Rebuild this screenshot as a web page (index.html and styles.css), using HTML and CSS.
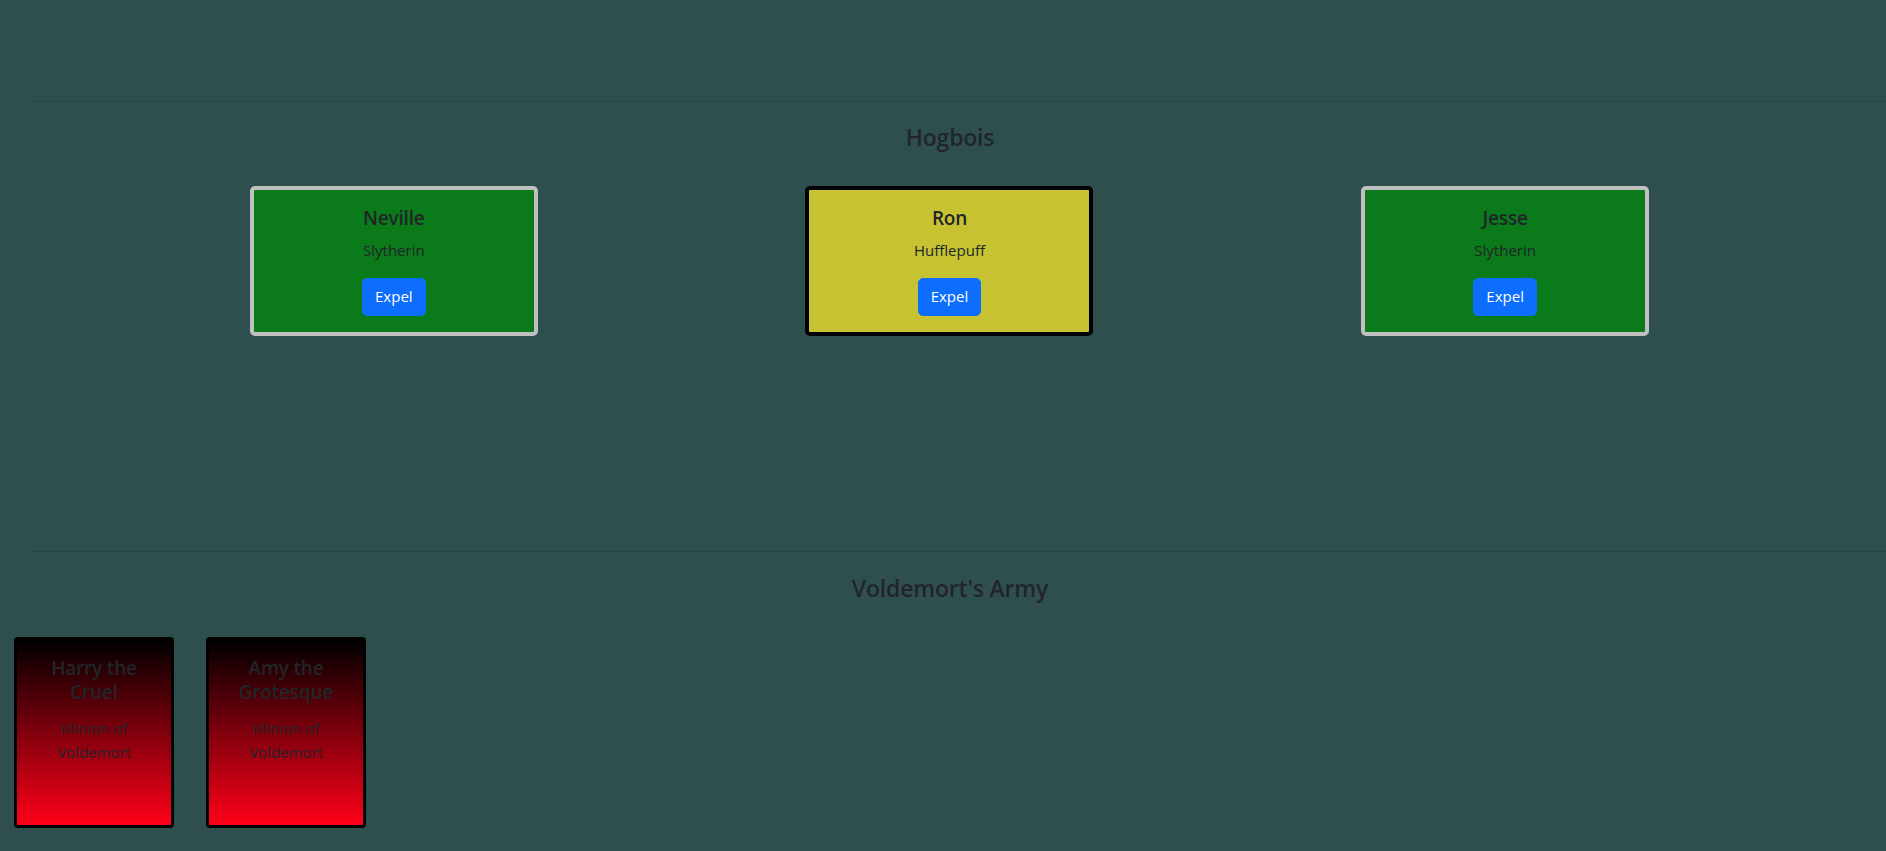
FILE: index.html
```html
<!DOCTYPE html>
<html lang="en">
<head>
<meta charset="utf-8">
<title>Hogwarts</title>
<link rel="stylesheet" href="styles.css">
</head>
<body>
  <header class="top"></header>

  <section class="house">
    <hr class="divider">
    <h4 class="section-title">Hogbois</h4>
    <div class="student-row">
      <div class="student-col">
        <div class="student-card slytherin">
          <h5 class="student-name">Neville</h5>
          <p class="student-house">Slytherin</p>
          <button class="btn-expel" type="button">Expel</button>
        </div>
      </div>
      <div class="student-col">
        <div class="student-card hufflepuff">
          <h5 class="student-name">Ron</h5>
          <p class="student-house">Hufflepuff</p>
          <button class="btn-expel" type="button">Expel</button>
        </div>
      </div>
      <div class="student-col">
        <div class="student-card slytherin">
          <h5 class="student-name">Jesse</h5>
          <p class="student-house">Slytherin</p>
          <button class="btn-expel" type="button">Expel</button>
        </div>
      </div>
    </div>
  </section>

  <section class="army">
    <hr class="divider">
    <h4 class="section-title">Voldemort's Army</h4>
    <div class="minion-row">
      <div class="minion-card">
        <h5 class="student-name">Harry the Cruel</h5>
        <p class="student-house">Minion of Voldemort</p>
      </div>
      <div class="minion-card">
        <h5 class="student-name">Amy the Grotesque</h5>
        <p class="student-house">Minion of Voldemort</p>
      </div>
    </div>
  </section>
</body>
</html>
```

FILE: styles.css
```css
* { box-sizing: border-box; }

html, body {
  margin: 0;
  padding: 0;
}

body {
  background: #2f4f4f;
  color: #212529;
  font-family: "Open Sans", "Noto Sans", "Liberation Sans", sans-serif;
  font-size: 16px;
  line-height: 1.5;
  overflow: hidden;
}

.top {
  height: 101px;
}

.divider {
  margin: 0 0 0 28px;
  border: 0;
  border-top: 1px solid #212529;
  opacity: 0.25;
}

.section-title {
  margin: 22px 0 0;
  padding-left: 14px;
  text-align: center;
  font-size: 23px;
  font-weight: 600;
  line-height: 1.2;
  letter-spacing: -0.2px;
}

.student-row {
  display: grid;
  grid-template-columns: repeat(3, 1fr);
  padding: 0 103px 0 116px;
  margin-top: 34px;
  margin-bottom: 215px;
}

.student-col {
  display: flex;
  justify-content: center;
}

.student-card {
  width: 288px;
  height: 150px;
  padding: 16px;
  border: 4px solid #c2c2c2;
  border-radius: 5px;
  display: flex;
  flex-direction: column;
  align-items: center;
  text-align: center;
}

.slytherin {
  background: #0b7a1a;
  border-color: #c0c0c0;
}

.hufflepuff {
  background: #c6c232;
  border-color: #000;
}

.student-name {
  margin: 0 0 8px;
  font-size: 19px;
  font-weight: 600;
  line-height: 24px;
  letter-spacing: -0.2px;
}

.student-house {
  margin: 0 0 16px;
  font-size: 15px;
  line-height: 24px;
}

.btn-expel {
  height: 38px;
  padding: 0 12px;
  background: #0d6efd;
  color: #fff;
  border: 1px solid #0d6efd;
  border-radius: 5px;
  font-family: inherit;
  font-size: 15px;
  line-height: 1.5;
  cursor: pointer;
}

.army .section-title {
  margin-top: 23px;
}

.minion-row {
  display: flex;
  gap: 32px;
  padding-left: 14px;
  margin-top: 35px;
}

.minion-card {
  width: 160px;
  height: 191px;
  padding: 16px;
  border: 3px solid #000;
  border-radius: 4px;
  background: linear-gradient(to bottom, #000 0%, #ff0019 100%);
  text-align: center;
}

.minion-card .student-house {
  margin-top: 12px;
}
```
